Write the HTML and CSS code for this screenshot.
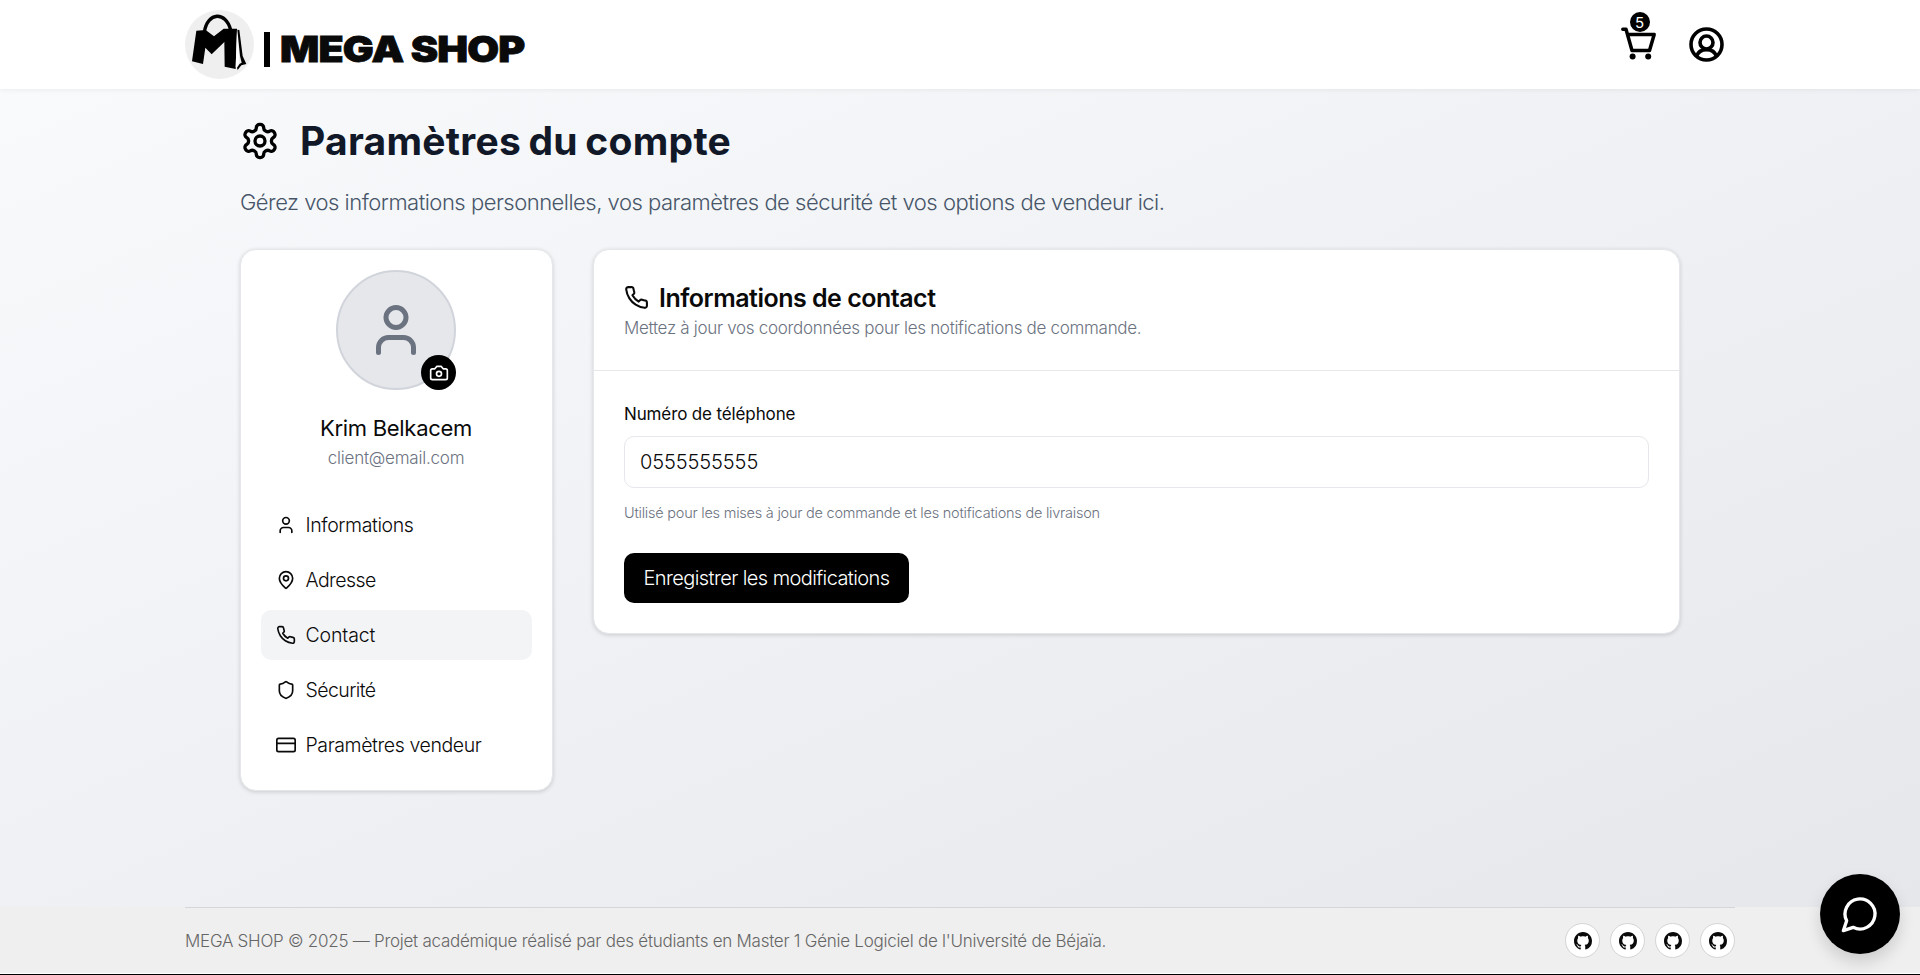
FILE: index.html
```html
<!DOCTYPE html>
<html lang="fr">
<head>
<meta charset="utf-8">
<title>MEGA SHOP</title>
<link rel="stylesheet" href="styles.css">
</head>
<body>
<svg class="defs" aria-hidden="true">
  <symbol id="user" viewBox="0 0 24 24"><path d="M19 21v-2a4 4 0 0 0-4-4H9a4 4 0 0 0-4 4v2"/><circle cx="12" cy="7" r="4"/></symbol>
  <symbol id="pin" viewBox="0 0 24 24"><path d="M20 10c0 4.993-5.539 10.193-7.399 11.799a1 1 0 0 1-1.202 0C9.539 20.193 4 14.993 4 10a8 8 0 0 1 16 0"/><circle cx="12" cy="10" r="3"/></symbol>
  <symbol id="phone" viewBox="0 0 24 24"><path d="M22 16.92v3a2 2 0 0 1-2.18 2 19.79 19.79 0 0 1-8.63-3.07 19.5 19.5 0 0 1-6-6 19.79 19.79 0 0 1-3.07-8.67A2 2 0 0 1 4.11 2h3a2 2 0 0 1 2 1.72 12.84 12.84 0 0 0 .7 2.81 2 2 0 0 1-.45 2.11L8.09 9.91a16 16 0 0 0 6 6l1.27-1.27a2 2 0 0 1 2.11-.45 12.84 12.84 0 0 0 2.81.7A2 2 0 0 1 22 16.92z"/></symbol>
  <symbol id="shield" viewBox="0 0 24 24"><path d="M20 13c0 5-3.5 7.5-7.66 8.95a1 1 0 0 1-.67-.01C7.5 20.5 4 18 4 13V6a1 1 0 0 1 1-1c2 0 4.5-1.2 6.24-2.72a1.17 1.17 0 0 1 1.52 0C14.51 3.81 17 5 19 5a1 1 0 0 1 1 1z"/></symbol>
  <symbol id="card" viewBox="0 0 24 24"><rect x="1" y="4" width="22" height="16" rx="2"/><path d="M1 10h22"/></symbol>
  <symbol id="camera" viewBox="0 0 24 24"><path d="M14.5 4h-5L7 7H4a2 2 0 0 0-2 2v9a2 2 0 0 0 2 2h16a2 2 0 0 0 2-2V9a2 2 0 0 0-2-2h-3l-2.500-3z"/><circle cx="12" cy="13" r="3"/></symbol>
  <symbol id="settings" viewBox="0 0 24 24"><path d="M12.22 2h-.44a2 2 0 0 0-2 2v.18a2 2 0 0 1-1 1.730l-.43.25a2 2 0 0 1-2 0l-.15-.08a2 2 0 0 0-2.730.73l-.22.38a2 2 0 0 0 .73 2.730l.15.1a2 2 0 0 1 1 1.720v.51a2 2 0 0 1-1 1.740l-.15.09a2 2 0 0 0-.73 2.730l.22.38a2 2 0 0 0 2.730.73l.15-.08a2 2 0 0 1 2 0l.43.25a2 2 0 0 1 1 1.730V20a2 2 0 0 0 2 2h.44a2 2 0 0 0 2-2v-.18a2 2 0 0 1 1-1.730l.43-.25a2 2 0 0 1 2 0l.15.08a2 2 0 0 0 2.730-.73l.22-.39a2 2 0 0 0-.73-2.730l-.15-.08a2 2 0 0 1-1-1.740v-.5a2 2 0 0 1 1-1.740l.15-.09a2 2 0 0 0 .73-2.730l-.22-.38a2 2 0 0 0-2.730-.73l-.15.08a2 2 0 0 1-2 0l-.43-.25a2 2 0 0 1-1-1.730V4a2 2 0 0 0-2-2z"/><circle cx="12" cy="12" r="3"/></symbol>
  <symbol id="chat" viewBox="0 0 24 24"><path d="M7.900 20A9 9 0 1 0 4 16.100L2 22Z"/></symbol>
  <symbol id="github" viewBox="0 0 16 16"><path d="M8 0C3.580 0 0 3.580 0 8c0 3.540 2.290 6.530 5.470 7.590.4.07.55-.17.55-.38 0-.19-.01-.82-.01-1.490-2.010.37-2.530-.49-2.690-.94-.09-.23-.48-.94-.82-1.130-.28-.15-.68-.52-.01-.53.63-.01 1.080.58 1.230.82.72 1.210 1.870.87 2.330.66.07-.52.28-.87.51-1.070-1.780-.2-3.640-.89-3.640-3.950 0-.87.31-1.590.82-2.150-.08-.2-.36-1.020.08-2.120 0 0 .67-.21 2.200.82.64-.18 1.320-.27 2-.27s1.360.09 2 .27c1.530-1.040 2.200-.82 2.200-.82.44 1.100.16 1.920.08 2.120.51.56.82 1.270.82 2.150 0 3.070-1.870 3.750-3.650 3.950.29.25.54.73.54 1.480 0 1.070-.01 1.930-.01 2.200 0 .21.15.46.55.38A8.010 8.010 0 0 0 16 8c0-4.420-3.580-8-8-8z"/></symbol>
</svg>

<header class="topbar">
  <div class="container topbar-inner">
    <a class="brand">
      <svg class="brand-logo" viewBox="45 30 207 207">
        <circle cx="148.500" cy="133.500" r="103.500" fill="#efefef"/>
        <path d="M79 92 107 90 132 109 161 86 201 86 197 207 164 200 163 126 125 163 106 143 99 192 66 184z"/>
        <path d="M103 96C113 34 168 34 182 90" fill="none" stroke="#000" stroke-width="10"/>
        <path d="M201 90 203 90 207 165 207 190 199 204 197 200z" fill="#fff"/>
        <path d="M202 89 208 90 218 168 229 192 214 196 203 210 201 203 209 191 215 188 210 168z"/>
      </svg>
      <span class="brand-bar"></span>
      <span class="brand-name">MEGA SHOP</span>
    </a>
    <div class="topbar-actions">
      <a class="cart">
        <svg class="cart-icon" viewBox="0 0 36 34">
          <path d="M1.800 2.200H5L11 23.400H28.500L33.200 7.500H6.500" fill="none" stroke="#000" stroke-width="3.500" stroke-linecap="round" stroke-linejoin="round"/>
          <circle cx="11.600" cy="29.500" r="3"/><circle cx="27.200" cy="29.500" r="3"/>
        </svg>
        <span class="cart-count">5</span>
      </a>
      <svg class="account" viewBox="0 0 35 35" fill="none" stroke="#000" stroke-width="3.600">
        <circle cx="17.500" cy="17.500" r="15.500"/><circle cx="17.500" cy="15.500" r="6.500"/>
        <path d="M7.500 29.500C9 24.500 13 22.600 17.500 22.600S26 24.500 27.500 29.500"/>
      </svg>
    </div>
  </div>
</header>

<main class="page">
  <div class="page-inner">
    <h1 class="page-title"><svg class="icon title-icon"><use href="#settings"/></svg><span>Paramètres du compte</span></h1>
    <p class="page-sub">Gérez vos informations personnelles, vos paramètres de sécurité et vos options de vendeur ici.</p>
    <div class="layout">
      <aside class="card sidebar">
        <div class="avatar">
          <svg class="icon avatar-icon"><use href="#user"/></svg>
          <span class="avatar-edit"><svg class="icon camera-icon"><use href="#camera"/></svg></span>
        </div>
        <div class="name">Krim Belkacem</div>
        <div class="email">client@email.com</div>
        <nav class="menu">
          <a class="menu-item"><svg class="icon"><use href="#user"/></svg><span>Informations</span></a>
          <a class="menu-item tight"><svg class="icon"><use href="#pin"/></svg><span>Adresse</span></a>
          <a class="menu-item wide active"><svg class="icon"><use href="#phone"/></svg><span>Contact</span></a>
          <a class="menu-item tight"><svg class="icon"><use href="#shield"/></svg><span>Sécurité</span></a>
          <a class="menu-item"><svg class="icon"><use href="#card"/></svg><span>Paramètres vendeur</span></a>
        </nav>
      </aside>
      <section class="card contact">
        <div class="contact-head">
          <h2 class="contact-title"><svg class="icon contact-icon"><use href="#phone"/></svg><span>Informations de contact</span></h2>
          <p class="contact-sub">Mettez à jour vos coordonnées pour les notifications de commande.</p>
        </div>
        <div class="contact-body">
          <label class="label">Numéro de téléphone</label>
          <div class="field">0555555555</div>
          <p class="help">Utilisé pour les mises à jour de commande et les notifications de livraison</p>
          <button class="save">Enregistrer les modifications</button>
        </div>
      </section>
    </div>
  </div>
</main>

<footer class="footer">
  <div class="container footer-inner">
    <span>MEGA SHOP © 2025 — Projet académique réalisé par des étudiants en Master 1 Génie Logiciel de l'Université de Béjaïa.</span>
    <div class="socials">
      <a class="social"><svg><use href="#github"/></svg></a>
      <a class="social"><svg><use href="#github"/></svg></a>
      <a class="social"><svg><use href="#github"/></svg></a>
      <a class="social"><svg><use href="#github"/></svg></a>
    </div>
  </div>
</footer>
<a class="chat"><svg class="icon chat-icon"><use href="#chat"/></svg></a>
</body>
</html>
```

FILE: styles.css
```css
* { box-sizing: border-box; }
body {
  margin: 0;
  height: 975px;
  overflow: hidden;
  display: flex;
  flex-direction: column;
  font-family: Inter, "Liberation Sans", sans-serif;
  font-weight: 300;
  color: #0a0a0a;
  background: #fff;
  border-bottom: 1px solid #000;
}
h1, h2, p { margin: 0; }
.defs { display: none; }
.icon { fill: none; stroke: currentColor; stroke-width: 2; stroke-linecap: round; stroke-linejoin: round; width: 20px; height: 20px; flex: none; }
.container { width: 1550px; margin: 0 auto; }

.topbar { height: 89px; flex: none; background: #fff; box-shadow: 0 1px 5px rgba(0, 0, 0, .06); z-index: 1; }
.topbar-inner { height: 89px; display: flex; justify-content: space-between; }
.brand { display: flex; padding-top: 10px; }
.brand-logo { width: 69px; height: 69px; }
.brand-bar { width: 6px; height: 35px; margin: 22px 10px 0; background: #000; }
.brand-name {
  font-size: 35px; line-height: 44px; font-weight: 900; margin-top: 17px; white-space: nowrap; letter-spacing: -.7px;
  -webkit-text-stroke: .8px #0a0a0a; transform-origin: 0 50%; transform: scaleX(1.175);
}
.topbar-actions { display: flex; gap: 32.500px; padding: 27px 11px 0 0; }
.cart { position: relative; width: 36px; height: 34px; }
.cart-icon { width: 36px; height: 34px; display: block; }
.cart-count {
  position: absolute; left: 9px; top: -15px; width: 20px; height: 20px; border-radius: 50%;
  background: #000; color: #fff; font-size: 15px; line-height: 21px; text-align: center; font-weight: 400;
}
.account { width: 35px; height: 35px; }

.page { flex: 1; background: linear-gradient(to bottom right, #f8fafc, #e5e7eb); }
.page-inner { width: 1440px; margin: 0 auto; padding-top: 31px; }
.page-title { display: flex; align-items: center; gap: 20px; height: 41px; font-size: 39px; letter-spacing: .25px; word-spacing: -2px; font-weight: 700; color: #111827; white-space: nowrap; }
.title-icon { width: 40px; height: 40px; color: #000; }
.page-sub { margin-top: 24px; height: 34px; line-height: 34px; font-size: 22px; letter-spacing: -.5px; color: #475569; white-space: nowrap; }
.layout { display: flex; align-items: flex-start; gap: 40px; margin-top: 30px; }
.card { background: #fff; border: 1px solid #e5e7eb; border-radius: 16px; box-shadow: 0 1px 4px rgba(0, 0, 0, .16); }
.sidebar { width: 313px; height: 542px; padding: 20px 21px 20px 20px; display: flex; flex-direction: column; align-items: center; }
.avatar { position: relative; width: 120px; height: 120px; border-radius: 50%; background: #e5e7eb; border: 2px solid #d1d5db; display: flex; align-items: center; justify-content: center; flex: none; }
.avatar-icon { width: 60px; height: 60px; color: #6b7280; }
.avatar-edit { position: absolute; right: -2px; bottom: -2px; width: 35px; height: 35px; border-radius: 50%; background: #000; color: #fff; display: flex; align-items: center; justify-content: center; }
.name { margin-top: 23px; font-size: 22px; line-height: 30px; font-weight: 400; letter-spacing: -.3px; white-space: nowrap; }
.email { margin-top: 2px; font-size: 17px; line-height: 26px; letter-spacing: -.22px; color: #6b7280; }
.menu { display: grid; gap: 5px; width: 271px; margin-top: 29px; }
.menu-item { display: flex; align-items: center; gap: 10px; height: 50px; padding: 0 15px; border-radius: 10px; font-size: 19.500px; letter-spacing: -.4px; white-space: nowrap; }
.menu-item.tight { letter-spacing: -.58px; }
.menu-item.wide { letter-spacing: -.12px; }
.menu-item.active { background: #f3f4f6; }
.contact { width: 1087px; height: 385px; }
.contact-head { height: 121px; padding: 32px 30px 0; border-bottom: 1px solid #e5e7eb; }
.contact-title { display: flex; align-items: center; gap: 10px; height: 32px; font-size: 25px; font-weight: 600; letter-spacing: -.5px; }
.contact-icon { width: 25px; height: 25px; margin-top: -2px; }
.contact-sub { font-size: 17px; line-height: 28px; letter-spacing: -.3px; color: #6b7280; }
.contact-body { padding: 30px; }
.label { display: block; height: 26px; line-height: 26px; font-size: 17px; letter-spacing: -.13px; font-weight: 400; }
.field { height: 52px; margin-top: 9px; padding: 0 15px; line-height: 50px; font-size: 20px; letter-spacing: -.1px; border: 1px solid #e5e7eb; border-radius: 10px; }
.help { margin-top: 12px; height: 25px; line-height: 25px; font-size: 14.500px; letter-spacing: -.23px; color: #6b7280; }
.save { display: flex; align-items: center; justify-content: center; width: 285px; height: 50px; margin-top: 28px; padding: 0; border: 0; border-radius: 10px; background: #000; color: #fff; font: 300 20px Inter, sans-serif; letter-spacing: -.59px; white-space: nowrap; }

.footer { height: 67px; flex: none; background: #efefef; border-bottom: 1px solid #fff; }
.footer-inner { height: 66px; border-top: 1px solid #d4d6da; display: flex; align-items: center; justify-content: space-between; font-size: 17px; letter-spacing: -.26px; color: #666; white-space: nowrap; }
.socials { display: flex; gap: 10px; }
.social { width: 35px; height: 35px; border-radius: 50%; border: 1px solid #d4d4d4; background: #fff; display: flex; align-items: center; justify-content: center; }
.social svg { width: 18px; height: 18px; fill: #0a0a0a; }
.chat { position: absolute; left: 1820px; top: 874px; width: 80px; height: 80px; border-radius: 50%; background: #000; color: #fff; display: flex; align-items: center; justify-content: center; box-shadow: 0 8px 16px rgba(0, 0, 0, .14); z-index: 2; }
.chat-icon { width: 40px; height: 40px; }
```
